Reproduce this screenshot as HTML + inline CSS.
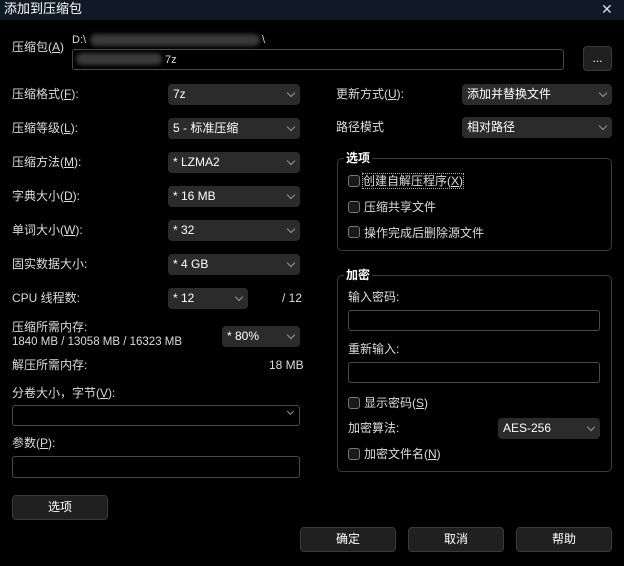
<!DOCTYPE html><html><head><meta charset="utf-8"><style>
*{margin:0;padding:0;box-sizing:border-box}
body{width:624px;height:566px;background:#000;position:relative;overflow:hidden;font-family:"Liberation Sans","Noto Sans CJK SC",sans-serif;font-size:12px;color:#dcdcdc}
.a{position:absolute;white-space:nowrap}
.t{line-height:14px}
.cb{position:absolute;height:21px;background:#2b2b2b;border-radius:4px;color:#fff;padding-left:5px;line-height:21px}
.cb:after{content:"";position:absolute;right:6px;top:6px;width:5px;height:5px;border-right:1px solid #999;border-bottom:1px solid #999;transform:rotate(45deg)}
.in{position:absolute;height:21px;border:1px solid #4a4a4a;border-radius:3px;background:#000}
.btn{position:absolute;height:25px;background:#202020;border:1px solid #3a3a3a;border-radius:4px;color:#fff;text-align:center;line-height:23px;font-size:12px}
.gb{position:absolute;border:1px solid #3a3a3a;border-radius:5px}
.gt{position:absolute;background:#000;color:#fff;font-weight:bold;padding:0 2px;line-height:14px}
.ck{position:absolute;width:12px;height:12px;border:1px solid #777;border-radius:3px;background:#1a1a1a}
.blob{position:absolute;background:#3a3a3a;border-radius:8px;filter:blur(2px)}
</style></head><body>
<div class="a" style="left:0;top:0;width:624px;height:20px;background:#101a27"></div>
<div class="a t" style="left:4px;top:2px;color:#fff;font-size:13px">添加到压缩包</div>
<div class="a" style="left:601px;top:1px;color:#ddd;font-size:14px">✕</div>

<div class="a t" style="left:12px;top:40px">压缩包(<u>A</u>)</div>
<div class="a t" style="left:72px;top:33px;font-size:11px">D:\</div>
<div class="blob" style="left:90px;top:34px;width:170px;height:12px"></div>
<div class="a t" style="left:262px;top:33px;font-size:11px">\</div>
<div class="in" style="left:72px;top:49px;width:492px"></div>
<div class="blob" style="left:76px;top:53px;width:86px;height:12px"></div>
<div class="a t" style="left:165px;top:53px;font-size:11px">7z</div>
<div class="btn" style="left:583px;top:46px;width:29px;height:25px">...</div>

<div class="a t" style="left:12px;top:87px">压缩格式(<u>F</u>):</div>
<div class="cb" style="left:168px;top:84px;width:132px">7z</div>
<div class="a t" style="left:12px;top:121px">压缩等级(<u>L</u>):</div>
<div class="cb" style="left:168px;top:118px;width:132px">5 - 标准压缩</div>
<div class="a t" style="left:12px;top:155px">压缩方法(<u>M</u>):</div>
<div class="cb" style="left:168px;top:152px;width:132px">* LZMA2</div>
<div class="a t" style="left:12px;top:189px">字典大小(<u>D</u>):</div>
<div class="cb" style="left:168px;top:186px;width:132px">* 16 MB</div>
<div class="a t" style="left:12px;top:223px">单词大小(<u>W</u>):</div>
<div class="cb" style="left:168px;top:220px;width:132px">* 32</div>
<div class="a t" style="left:12px;top:257px">固实数据大小:</div>
<div class="cb" style="left:168px;top:254px;width:132px">* 4 GB</div>
<div class="a t" style="left:12px;top:291px">CPU 线程数:</div>
<div class="cb" style="left:168px;top:288px;width:80px">* 12</div>
<div class="a t" style="left:282px;top:291px">/ 12</div>
<div class="a t" style="left:12px;top:320px">压缩所需内存:</div>
<div class="a t" style="left:12px;top:335px;font-size:11.5px">1840 MB / 13058 MB / 16323 MB</div>
<div class="cb" style="left:222px;top:326px;width:78px">* 80%</div>
<div class="a t" style="left:12px;top:358px">解压所需内存:</div>
<div class="a t" style="left:269px;top:358px">18 MB</div>
<div class="a t" style="left:12px;top:386px">分卷大小，字节(<u>V</u>):</div>
<div class="in" style="left:12px;top:405px;width:288px"></div>
<div class="a" style="left:288px;top:409px;width:5px;height:5px;border-right:1px solid #999;border-bottom:1px solid #999;transform:rotate(45deg)"></div>
<div class="a t" style="left:12px;top:436px">参数(<u>P</u>):</div>
<div class="in" style="left:12px;top:456px;width:288px;height:22px"></div>
<div class="btn" style="left:12px;top:495px;width:96px">选项</div>

<div class="a t" style="left:336px;top:87px">更新方式(<u>U</u>):</div>
<div class="cb" style="left:462px;top:84px;width:150px">添加并替换文件</div>
<div class="a t" style="left:336px;top:120px">路径模式</div>
<div class="cb" style="left:462px;top:117px;width:150px">相对路径</div>

<div class="gb" style="left:337px;top:158px;width:275px;height:93px"></div>
<div class="gt" style="left:344px;top:151px">选项</div>
<div class="ck" style="left:348px;top:175px"></div><div class="a t" style="left:363px;top:174px;outline:1px dotted #aaa">创建自解压程序(<u>X</u>)</div>
<div class="ck" style="left:348px;top:201px"></div><div class="a t" style="left:364px;top:200px">压缩共享文件</div>
<div class="ck" style="left:348px;top:226px"></div><div class="a t" style="left:364px;top:226px">操作完成后删除源文件</div>

<div class="gb" style="left:337px;top:275px;width:275px;height:197px"></div>
<div class="gt" style="left:344px;top:268px">加密</div>
<div class="a t" style="left:348px;top:290px">输入密码:</div>
<div class="in" style="left:348px;top:310px;width:252px"></div>
<div class="a t" style="left:348px;top:342px">重新输入:</div>
<div class="in" style="left:348px;top:362px;width:252px"></div>
<div class="ck" style="left:348px;top:397px"></div><div class="a t" style="left:364px;top:396px">显示密码(<u>S</u>)</div>
<div class="a t" style="left:348px;top:421px">加密算法:</div>
<div class="cb" style="left:498px;top:418px;width:102px">AES-256</div>
<div class="ck" style="left:348px;top:448px"></div><div class="a t" style="left:364px;top:447px">加密文件名(<u>N</u>)</div>

<div class="btn" style="left:300px;top:527px;width:96px">确定</div>
<div class="btn" style="left:408px;top:527px;width:96px">取消</div>
<div class="btn" style="left:516px;top:527px;width:96px">帮助</div>
</body></html>
